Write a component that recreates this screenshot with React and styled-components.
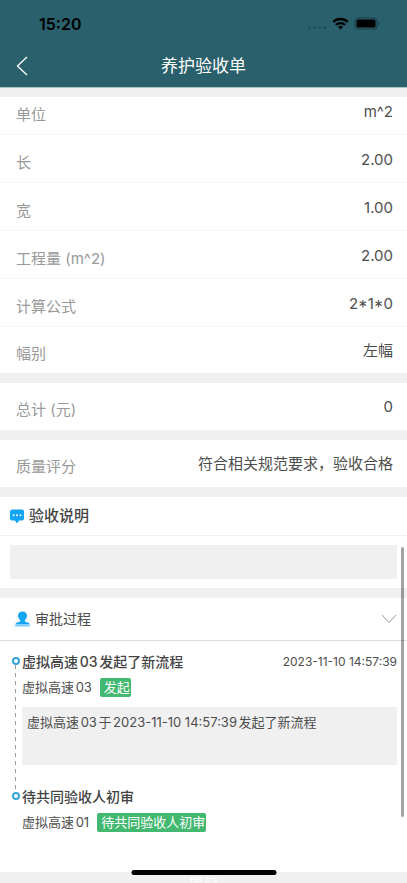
import React, { useState } from "react";
import styled, { createGlobalStyle } from "styled-components";

const GlobalStyle = createGlobalStyle`
  * {
    box-sizing: border-box;
  }

  body {
    margin: 0;
    background: #f0f0f0;
    color: #4d4d4d;
    font-family: Inter, "Noto Sans CJK SC", sans-serif;
    font-size: 13px;
    line-height: 20px;
    text-autospace: normal;
  }

  button,
  textarea {
    font-family: inherit;
    border: 0;
    margin: 0;
    padding: 0;
    background: none;
  }
`;

const Page = styled.div`
  position: relative;
  display: flex;
  flex-direction: column;
  height: 100vh;
  overflow: hidden;
`;

const TopBar = styled.header`
  flex: none;
  background: #2a606c;
  border-bottom: 1px solid #a9c3c9;
`;

const StatusBar = styled.div`
  display: flex;
  align-items: center;
  justify-content: space-between;
  height: 44px;
  padding: 3px 26px 0 39px;
  color: #000;
`;

const Clock = styled.span`
  font-size: 16px;
  font-weight: 600;
`;

const NavBar = styled.div`
  display: grid;
  grid-template-columns: 44px 1fr 44px;
  align-items: center;
  height: 43px;
`;

const BackButton = styled.button`
  display: flex;
  height: 43px;
  align-items: center;
  padding-left: 16px;
`;

const NavTitle = styled.h1`
  margin: 0;
  color: #fff;
  font-size: 17px;
  font-weight: 400;
  line-height: 24px;
  text-align: center;
`;

const Content = styled.main`
  flex: 1;
  min-height: 0;
  padding-top: 9px;
  overflow: hidden;
`;

const Panel = styled.section`
  margin-bottom: 10px;
  background: #fff;
`;

const List = styled.dl`
  margin: 0;
`;

const Row = styled.div`
  display: flex;
  align-items: flex-end;
  justify-content: space-between;
  height: ${({ $clipped }) => ($clipped ? "38px" : "48px")};
  padding: 0 14px 9px 16px;
  border-bottom: 1px solid #f7f7f7;
  font-size: 15px;

  &:last-child {
    height: 46px;
    border-bottom: 0;
  }

  &:only-child {
    height: 47px;
    padding-bottom: 10px;
  }
`;

const Label = styled.dt`
  color: #999;
`;

const Value = styled.dd`
  margin: 0;
  padding-bottom: 3px;
`;

const SectionTitle = styled.h2`
  display: flex;
  align-items: center;
  gap: 5px;
  height: 39px;
  margin: 0;
  padding: 0 10px;
  border-bottom: 1px solid #f0f0f0;
  color: #444;
  font-size: 15px;
  font-weight: 500;
`;

const NoteArea = styled.div`
  padding: 9px 10px;
`;

const Note = styled.textarea`
  display: block;
  width: 100%;
  height: 34px;
  background: #f0f0f0;
  resize: none;
`;

const ProcessToggle = styled.button`
  display: flex;
  align-items: center;
  gap: 5px;
  width: 100%;
  height: 43px;
  padding: 0 10px 0 15px;
  border-bottom: 1px solid #ddd;
  color: #4d4d4d;
  font-size: 14px;
  line-height: 20px;

  svg:last-child {
    margin-left: auto;
  }
`;

const Timeline = styled.ol`
  margin: 0;
  padding: 11px 10px 40px 11px;
  list-style: none;
`;

const Step = styled.li`
  display: flex;
  gap: 2px;
`;

const Rail = styled.div`
  display: flex;
  flex: none;
  flex-direction: column;
  align-items: center;
  width: 9px;
  padding-top: 5px;
`;

const Dot = styled.span`
  width: 8px;
  height: 8px;
  border: 2px solid #39a5d8;
  border-radius: 50%;
`;

const RailLine = styled.span`
  flex: 1;
  width: 1px;
  margin-bottom: -5px;
  background: repeating-linear-gradient(#999 0 4px, transparent 4px 8px);
`;

const StepBody = styled.div`
  flex: 1;
  min-width: 0;
`;

const StepHead = styled.div`
  display: flex;
  justify-content: space-between;
`;

const StepTitle = styled.h3`
  margin: 0;
  color: #444;
  font-size: 14px;
  font-weight: 500;
`;

const StepTime = styled.time`
  font-size: 12px;
`;

const StepUser = styled.div`
  display: flex;
  align-items: center;
  gap: 8px;
  margin-top: 6px;
  line-height: 19px;
`;

const Tag = styled.span`
  padding: 0 1px 0 4px;
  border-radius: 2px;
  background: #43b871;
  color: #fff;
`;

const StepNote = styled.p`
  height: 58px;
  margin: 10px 0 22px;
  padding: 5px;
  background: #f0f0f0;
`;

const SubmitButton = styled.button`
  display: block;
  width: 100%;
  height: 24px;
  margin-top: -10px;
  background: #f0f0f0;
  color: #fff;
  font-size: 15px;
  line-height: 20px;
`;

const ScrollThumb = styled.div`
  position: absolute;
  top: 62%;
  right: 3px;
  width: 3px;
  height: 270px;
  border-radius: 2px;
  background: rgba(0, 0, 0, 0.36);
`;

const HomeIndicator = styled.div`
  position: absolute;
  bottom: 8px;
  left: 50%;
  width: 145px;
  height: 5px;
  border-radius: 3px;
  background: #000;
  transform: translateX(-50%);
`;

const StatusIcons = () => (
  <svg width="74" height="16" viewBox="0 0 74 16" aria-hidden="true">
    <g fill="#214f5a">
      <circle cx="2.5" cy="11.5" r="1.5" />
      <circle cx="7.5" cy="11.5" r="1.5" />
      <circle cx="12.5" cy="11.5" r="1.5" />
      <circle cx="17.5" cy="11.5" r="1.5" />
    </g>
    <g fill="none" stroke="#000" strokeWidth="2.4">
      <path d="M26.3 6a10.3 10.3 0 0 1 14.4 0" />
      <path d="M29 9a6.400 6.400 0 0 1 9 0" />
    </g>
    <path d="M33.5 13.6l-2.500-2.600a3.500 3.500 0 0 1 5 0z" />
    <rect x="48" y="2" width="22" height="11" rx="3" fill="none" stroke="#1a3c45" />
    <rect x="49.500" y="3.500" width="19" height="8" rx="1.500" />
    <path d="M71.500 5.800v3.400c1.600-.5 1.600-2.900 0-3.400z" fill="#1a3c45" />
  </svg>
);

const BackIcon = () => (
  <svg width="12" height="20" viewBox="0 0 12 20" aria-hidden="true">
    <path d="M11 1L1.500 10 11 19" fill="none" stroke="#fff" strokeWidth="1.300" />
  </svg>
);

const MessageIcon = () => (
  <svg width="14" height="15" viewBox="0 0 14 15" aria-hidden="true">
    <path
      d="M2 0.500h10a2 2 0 0 1 2 2v7a2 2 0 0 1-2 2H9L7 14.500 5 11.500H2a2 2 0 0 1-2-2v-7a2 2 0 0 1 2-2z"
      fill="#12a5f4"
    />
    <g fill="#fff">
      <circle cx="3.500" cy="6.200" r="1" />
      <circle cx="7" cy="6.200" r="1" />
      <circle cx="10.500" cy="6.200" r="1" />
    </g>
  </svg>
);

const UserIcon = () => (
  <svg width="15" height="16" viewBox="0 0 15 16" aria-hidden="true">
    <path
      d="M7.500 0.500c2.800 0 4.500 1.800 4.500 4.300 0 1.900-.9 3.500-2.200 4.400v1.300l3.600 1.300c.8.300 1.100.8 1.100 1.700H.5c0-.9.300-1.400 1.100-1.700l3.600-1.300V9.200C3.900 8.300 3 6.700 3 4.800 3 2.300 4.700.5 7.500.5z"
      fill="#12a5f4"
    />
    <path d="M0 14h15v1.500H0z" fill="#7fcdf6" />
  </svg>
);

const ChevronIcon = () => (
  <svg width="16" height="10" viewBox="0 0 16 10" aria-hidden="true">
    <path d="M1 1l7 7.500L15 1" fill="none" stroke="#999" />
  </svg>
);

const details = [
  { label: "单位", value: "m^2" },
  { label: "长", value: "2.00" },
  { label: "宽", value: "1.00" },
  { label: "工程量 (m^2)", value: "2.00" },
  { label: "计算公式", value: "2*1*0" },
  { label: "幅别", value: "左幅" },
];

const steps = [
  {
    title: "虚拟高速03发起了新流程",
    time: "2023-11-10 14:57:39",
    user: "虚拟高速03",
    status: "发起",
    note: "虚拟高速03于2023-11-10 14:57:39发起了新流程",
  },
  { title: "待共同验收人初审", user: "虚拟高速01", status: "待共同验收人初审" },
];

const App = () => {
  const [open, setOpen] = useState(true);

  return (
    <Page>
      <GlobalStyle />
      <TopBar>
        <StatusBar>
          <Clock>15:20</Clock>
          <StatusIcons />
        </StatusBar>
        <NavBar>
          <BackButton type="button" aria-label="返回">
            <BackIcon />
          </BackButton>
          <NavTitle>养护验收单</NavTitle>
        </NavBar>
      </TopBar>

      <Content>
        <Panel>
          <List>
            {details.map(({ label, value }, i) => (
              <Row key={label} $clipped={i === 0}>
                <Label>{label}</Label>
                <Value>{value}</Value>
              </Row>
            ))}
          </List>
        </Panel>

        <Panel>
          <List>
            <Row>
              <Label>总计 (元)</Label>
              <Value>0</Value>
            </Row>
          </List>
        </Panel>

        <Panel>
          <List>
            <Row>
              <Label>质量评分</Label>
              <Value>符合相关规范要求，验收合格</Value>
            </Row>
          </List>
        </Panel>

        <Panel>
          <SectionTitle id="note-title">
            <MessageIcon />
            验收说明
          </SectionTitle>
          <NoteArea>
            <Note aria-labelledby="note-title" readOnly />
          </NoteArea>
        </Panel>

        <Panel>
          <ProcessToggle type="button" aria-expanded={open} onClick={() => setOpen(!open)}>
            <UserIcon />
            审批过程
            <ChevronIcon />
          </ProcessToggle>
          {open && (
            <Timeline>
              {steps.map((step, i) => (
                <Step key={step.title}>
                  <Rail>
                    <Dot />
                    {i < steps.length - 1 && <RailLine />}
                  </Rail>
                  <StepBody>
                    <StepHead>
                      <StepTitle>{step.title}</StepTitle>
                      {step.time && <StepTime>{step.time}</StepTime>}
                    </StepHead>
                    <StepUser>
                      {step.user}
                      <Tag>{step.status}</Tag>
                    </StepUser>
                    {step.note && <StepNote>{step.note}</StepNote>}
                  </StepBody>
                </Step>
              ))}
            </Timeline>
          )}
        </Panel>

        <SubmitButton type="button">提交</SubmitButton>
      </Content>

      <ScrollThumb />
      <HomeIndicator />
    </Page>
  );
};

export default App;
